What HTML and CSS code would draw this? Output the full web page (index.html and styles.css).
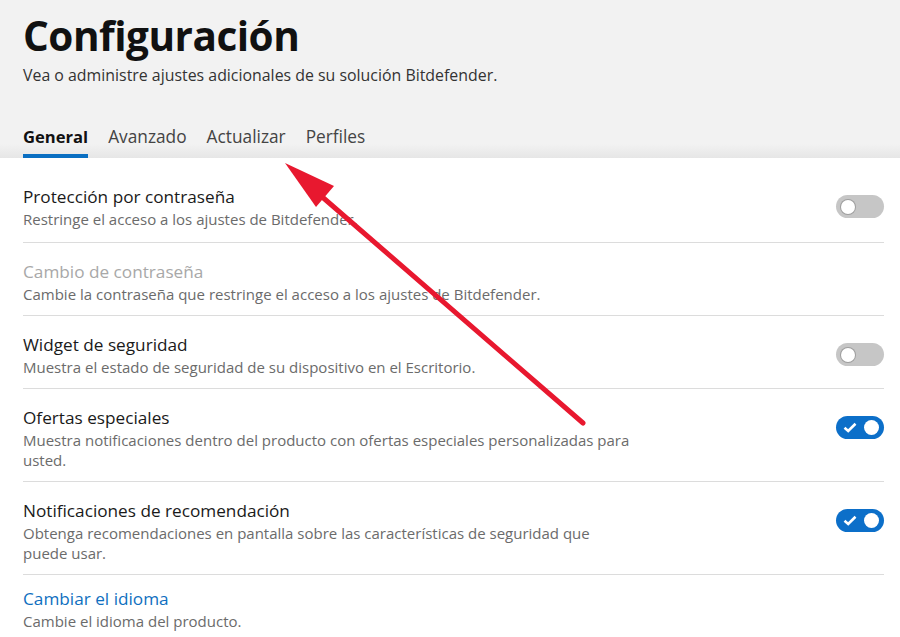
FILE: index.html
```html
<!DOCTYPE html>
<html lang="es">

<head>
	<meta charset="UTF-8">
	<title>Configuración</title>
	<link rel="stylesheet" href="styles.css">
</head>

<body>
	<header class="top">
		<h1>Configuración</h1>
		<p class="lead">Vea o administre ajustes adicionales de su solución Bitdefender.</p>
		<nav class="tabs">
			<a class="tab active">General</a>
			<a class="tab">Avanzado</a>
			<a class="tab">Actualizar</a>
			<a class="tab">Perfiles</a>
		</nav>
	</header>

	<section class="list">
		<div class="row first">
			<div class="text">
				<div class="name">Protección por contraseña</div>
				<div class="desc">Restringe el acceso a los ajustes de Bitdefender.</div>
			</div>
			<span class="switch"><span class="knob"></span></span>
		</div>
		<div class="row">
			<div class="text">
				<div class="name off">Cambio de contraseña</div>
				<div class="desc">Cambie la contraseña que restringe el acceso a los ajustes de Bitdefender.</div>
			</div>
		</div>
		<div class="row">
			<div class="text">
				<div class="name">Widget de seguridad</div>
				<div class="desc">Muestra el estado de seguridad de su dispositivo en el Escritorio.</div>
			</div>
			<span class="switch"><span class="knob"></span></span>
		</div>
		<div class="row">
			<div class="text">
				<div class="name">Ofertas especiales</div>
				<div class="desc">Muestra notificaciones dentro del producto con ofertas especiales personalizadas para<br>usted.</div>
			</div>
			<span class="switch on">
				<svg class="check" viewBox="0 0 14 11" width="14" height="11"><path d="M1.5 5.8 L5.2 9 L12.5 1.8" fill="none" stroke="#fff" stroke-width="2.6"/></svg>
				<span class="knob"></span>
			</span>
		</div>
		<div class="row">
			<div class="text">
				<div class="name">Notificaciones de recomendación</div>
				<div class="desc">Obtenga recomendaciones en pantalla sobre las características de seguridad que<br>puede usar.</div>
			</div>
			<span class="switch on">
				<svg class="check" viewBox="0 0 14 11" width="14" height="11"><path d="M1.5 5.8 L5.2 9 L12.5 1.8" fill="none" stroke="#fff" stroke-width="2.6"/></svg>
				<span class="knob"></span>
			</span>
		</div>
		<div class="row last">
			<div class="text">
				<div class="name link">Cambiar el idioma</div>
				<div class="desc">Cambie el idioma del producto.</div>
			</div>
		</div>
	</section>

	<!-- flecha roja encima -->
	<svg class="arrow" width="900" height="637" viewBox="0 0 900 637">
		<line x1="583" y1="423" x2="305" y2="182" stroke="#e8182f" stroke-width="5" stroke-linecap="round"/>
		<polygon points="285,163 334,186 316,207" fill="#e8182f"/>
	</svg>
</body>

</html>
```

FILE: styles.css
```css
body {
	margin: 0;
	background: #fff;
	color: #1a1a1a;
	font-family: 'Open Sans', 'Noto Sans', sans-serif;
	position: relative;
}

.top {
	padding: 12px 23px 0;
	background: linear-gradient(to bottom, #f2f2f2 calc(100% - 14px), #e6e6e6);
}

h1 {
	margin: 0;
	font-size: 40.5px;
	line-height: 48px;
	font-weight: 700;
	letter-spacing: -0.5px;
	color: #111;
}

.lead {
	margin: 5px 0 0;
	font-size: 15.9px;
	line-height: 20px;
	color: #333;
}

.tabs {
	display: flex;
	gap: 20px;
	margin-top: 40px;
}

.tab {
	font-size: 17.3px;
	line-height: 24px;
	padding-bottom: 5px;
	border-bottom: 4px solid transparent;
	color: #444;
}

.tab.active {
	font-size: 16.6px;
	font-weight: 700;
	color: #111;
	border-bottom-color: #0a6fc2;
}

.list {
	padding: 12px 16px 0 23px;
}

.row {
	display: flex;
	align-items: flex-start;
	justify-content: space-between;
	padding: 17px 0 11px;
	border-bottom: 1px solid #dcdcdc;
}

.row.first {
	padding-top: 15px;
	padding-bottom: 13px;
}

.row.last {
	padding-top: 12px;
	border-bottom: 0;
}

.name {
	font-size: 17.2px;
	line-height: 24px;
	color: #1a1a1a;
}

.name.off {
	color: #a8a8a8;
}

.name.link {
	color: #0f6fc0;
}

.desc {
	font-size: 15px;
	line-height: 20px;
	color: #6b6b6b;
}

.switch {
	flex: none;
	margin-top: 10px;
	width: 48px;
	height: 23px;
	border-radius: 12px;
	background: #c6c6c6;
	display: flex;
	align-items: center;
	justify-content: space-between;
	padding: 0 5px;
	box-sizing: border-box;
}

.knob {
	width: 14px;
	height: 14px;
	border-radius: 50%;
	background: #fff;
	box-shadow: 0 0 0 1px #9e9e9e;
}

.switch.on {
	background: #0c6fc9;
}

.switch.on .knob {
	box-shadow: none;
	width: 15px;
	height: 15px;
}

.check {
	margin-left: 2px;
}

.arrow {
	position: absolute;
	left: 0;
	top: 0;
	pointer-events: none;
}
```
